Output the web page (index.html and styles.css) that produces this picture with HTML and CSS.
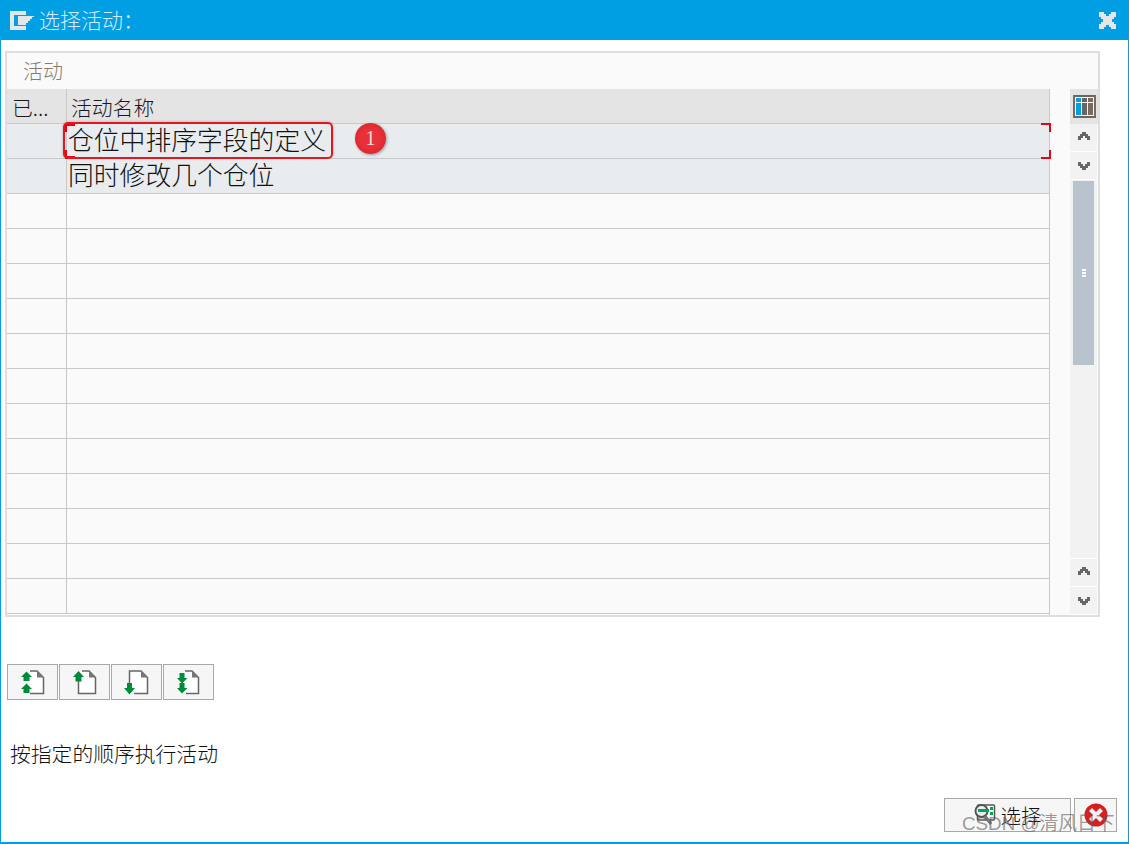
FILE: index.html
```html
<!DOCTYPE html>
<html lang="zh">
<head>
<meta charset="utf-8">
<title>选择活动</title>
<link rel="stylesheet" href="styles.css">
</head>
<body>
<div class="dialog">
  <header class="titlebar">
    <svg class="title-icon" width="25" height="19" viewBox="0 0 25 19"><path d="M0 0H16V4H4V15H16V19H0Z" fill="#e4e7e9"/><path d="M8 5H24V6H22V8H20V10H18V12H16V14H8Z" fill="#e4e7e9"/></svg>
    <span class="title-text">选择活动：</span>
    <svg class="title-close" width="17" height="17" viewBox="0 0 17 17"><path d="M0 0H5V2H7V4H10V2H12V0H17V5H15V7H13V10H15V12H17V17H12V15H10V13H7V15H5V17H0V12H2V10H4V7H2V5H0Z" fill="#e4e6e8"/></svg>
  </header>
  <main class="content">
    <section class="panel">
      <div class="panel-title">活动</div>
      <div class="panel-body">
        <div class="table">
          <div class="row head"><div class="c1">已...</div><div class="c2">活动名称</div></div>
          <div class="row filled">
            <div class="c1"></div><div class="c2 big">仓位中排序字段的定义</div>
            <i class="focus-tl"></i><i class="focus-bl"></i><i class="focus-tr"></i><i class="focus-br"></i>
            <span class="mark"></span><span class="badge">1</span>
          </div>
          <div class="row filled"><div class="c1"></div><div class="c2 big">同时修改几个仓位</div></div>
          <div class="row"><div class="c1"></div><div class="c2"></div></div>
          <div class="row"><div class="c1"></div><div class="c2"></div></div>
          <div class="row"><div class="c1"></div><div class="c2"></div></div>
          <div class="row"><div class="c1"></div><div class="c2"></div></div>
          <div class="row"><div class="c1"></div><div class="c2"></div></div>
          <div class="row"><div class="c1"></div><div class="c2"></div></div>
          <div class="row"><div class="c1"></div><div class="c2"></div></div>
          <div class="row"><div class="c1"></div><div class="c2"></div></div>
          <div class="row"><div class="c1"></div><div class="c2"></div></div>
          <div class="row"><div class="c1"></div><div class="c2"></div></div>
          <div class="row"><div class="c1"></div><div class="c2"></div></div>
          <div class="row"><div class="c1"></div><div class="c2"></div></div>
        </div>
        <div class="scrollcol">
          <div class="col-config">
            <svg width="23" height="23" viewBox="0 0 23 23"><rect width="23" height="23" fill="#f4f4f4"/><rect width="23" height="2" fill="#666"/><rect y="21" width="23" height="2" fill="#666"/><rect width="2" height="23" fill="#7a6a60"/><rect x="21" width="2" height="23" fill="#7a6a60"/><rect x="3" y="3" width="5" height="4" fill="#009fe3"/><rect x="9" y="3" width="5" height="4" fill="#666"/><rect x="15" y="3" width="5" height="4" fill="#7a6a60"/><rect x="3" y="8" width="5" height="12" fill="#009fe3"/><rect x="9" y="8" width="5" height="12" fill="#666"/><rect x="15" y="8" width="5" height="12" fill="#7a6a60"/></svg>
          </div>
          <div class="sb-btn"><svg class="chev-up" width="12" height="8" viewBox="0 0 12 8"><path d="M4 0H8V2H10V4H12V8H9V6H7V4H5V6H3V8H0V4H2V2H4Z" fill="#666"/></svg></div>
          <div class="sb-btn"><svg width="12" height="8" viewBox="0 0 12 8"><path d="M0 0H3V2H5V4H7V2H9V0H12V4H10V6H8V8H4V6H2V4H0Z" fill="#666"/></svg></div>
          <div class="sb-track"><div class="sb-thumb"><i></i><i></i><i></i></div></div>
          <div class="sb-btn"><svg class="chev-up" width="12" height="8" viewBox="0 0 12 8"><path d="M4 0H8V2H10V4H12V8H9V6H7V4H5V6H3V8H0V4H2V2H4Z" fill="#666"/></svg></div>
          <div class="sb-btn"><svg width="12" height="8" viewBox="0 0 12 8"><path d="M0 0H3V2H5V4H7V2H9V0H12V4H10V6H8V8H4V6H2V4H0Z" fill="#666"/></svg></div>
        </div>
      </div>
    </section>
    <div class="toolbar">
      <button class="tool"><svg width="24" height="25" viewBox="0 0 24 25"><path d="M9 1H16L22.5 7.5V23.5H9" fill="#fff" stroke="#666" stroke-width="1.5"/><path d="M16 1V7.5H22.5Z" fill="#777"/><path d="M5.5 1.5L11 7H8.5V11H2.5V7H0Z M5.5 13.5L11 19H8.5V23H2.5V19H0Z" fill="#008a3c"/></svg></button>
      <button class="tool"><svg width="24" height="25" viewBox="0 0 24 25"><path d="M9 1H16L22.5 7.5V23.5H5.5V11" fill="#fff" stroke="#666" stroke-width="1.5"/><path d="M16 1V7.5H22.5Z" fill="#777"/><path d="M5.5 1L11 7H8.5V11.5H2.5V7H0Z" fill="#008a3c"/></svg></button>
      <button class="tool"><svg width="26" height="25" viewBox="0 0 26 25"><path d="M5.5 13V1H17L23.5 7.5V23.5H10" fill="#fff" stroke="#666" stroke-width="1.5"/><path d="M17 1V7.5H23.5Z" fill="#777"/><path d="M3 13H8V18H11L5.5 24.5L0 18H3Z" fill="#008a3c"/></svg></button>
      <button class="tool"><svg width="24" height="25" viewBox="0 0 24 25"><path d="M8 1H15L21.5 7.5V23.5H9" fill="#fff" stroke="#666" stroke-width="1.5"/><path d="M15 1V7.5H21.5Z" fill="#777"/><path d="M2.5 3H7.5V8H10.5L5 13.5L0 8H2.5Z M2.5 13H7.5V18H10.5L5 23.5L0 18H2.5Z" fill="#008a3c"/></svg></button>
    </div>
    <p class="hint">按指定的顺序执行活动</p>
    <footer class="footer">
      <button class="action select"><svg width="22" height="24" viewBox="0 0 22 24"><rect x="3.5" y="2" width="17" height="15" rx="1" fill="#fff" stroke="#555" stroke-width="1.5"/><circle cx="7.5" cy="8" r="6" fill="#e8f0f0" stroke="#555" stroke-width="2"/><rect x="4" y="6" width="11" height="3" fill="#00a651"/><rect x="16" y="4" width="3" height="3" fill="#00a651"/><rect x="16" y="9" width="3" height="3" fill="#00a651"/><path d="M11 13L17 21" stroke="#777" stroke-width="3"/></svg><span>选择</span></button>
      <button class="action cancel"><svg width="24" height="24" viewBox="0 0 24 24"><circle cx="12" cy="12" r="11.5" fill="#d6201f"/><path d="M5 8L8 5L12 9L16 5L19 8L15 12L19 16L16 19L12 15L8 19L5 16L9 12Z" fill="#f2f2f2"/></svg></button>
    </footer>
  </main>
  <span class="watermark">CSDN @清风日下</span>
</div>
</body>
</html>
```
FILE: styles.css
```css
* { box-sizing: border-box; }
html, body { margin: 0; padding: 0; background: #fff; }
body { font-family: "Noto Sans CJK SC", "Liberation Sans", sans-serif; color: #1a1a1a; }
.dialog {
  position: relative; width: 1129px; height: 844px; display: flex; flex-direction: column;
  background: #fff; border: solid #009fe3; border-width: 0 1px 2px 1px; overflow: hidden;
}
.titlebar { height: 40px; margin: 0 -1px; background: #009fe3; display: flex; align-items: center; padding: 0 13px 0 10px; flex: none; }
.title-icon { margin-right: 4px; }
.title-text { font-size: 21px; line-height: 36px; height: 38px; font-weight: 300; color: #d4ecf8; flex: 1; }
.content { flex: 1; display: flex; flex-direction: column; padding: 11px 11px 10px 4px; min-height: 0; }
.panel { width: 1095px; height: 566px; border: 2px solid #dedede; background: #fafafa; display: flex; flex-direction: column; flex: none; }
.panel-title { height: 36px; padding-left: 16px; font-size: 20px; line-height: 36px; font-weight: 300; color: #8a7b6c; flex: none; }
.panel-body { display: flex; flex: 1; min-height: 0; }
.table { width: 1043px; flex: none; border-right: 1px solid #c9c9c9; }
.row { position: relative; display: flex; height: 35px; border-bottom: 1px solid #c9c9c9; }
.row.head { height: 35px; background: #e4e4e4; font-size: 20.8px; font-weight: 300; }
.row.filled { background: #e9ecef; }
.c1 { width: 60px; flex: none; border-right: 1px solid #c9c9c9; padding-left: 5px; line-height: 36px; }
.c2 { flex: 1; padding-left: 4px; line-height: 36px; }
.big { font-size: 25.8px; font-weight: 300; line-height: 30px; padding-left: 1px; color: #111; }
.focus-tl, .focus-bl, .focus-tr, .focus-br { position: absolute; width: 10px; height: 9px; border: solid #e30613; border-width: 0; }
.focus-tl { left: 58px; top: -1px; border-width: 3px 0 0 2px; }
.focus-bl { left: 58px; bottom: -1px; border-width: 0 0 3px 2px; }
.focus-tr { right: -2px; top: -1px; border-width: 2px 2px 0 0; }
.focus-br { right: -2px; bottom: -1px; border-width: 0 2px 2px 0; }
.mark { position: absolute; left: 56px; top: -2px; width: 270px; height: 37px; border: 2px solid #e8141c; border-radius: 5px; box-shadow: 0 0 3px rgba(0,0,0,.25); }
.badge { position: absolute; left: 348px; top: -1px; width: 31px; height: 31px; border-radius: 50%; background: radial-gradient(circle, #e8323a 40%, #d81c26 100%); box-shadow: 1px 1px 3px rgba(0,0,0,.35); color: #f6dcdc; font: 20px/31px "Liberation Serif", serif; text-align: center; }
.scrollcol { margin-left: 20px; width: 28px; display: flex; flex-direction: column; }
.col-config { height: 35px; background: #e4e4e4; display: flex; align-items: center; justify-content: center; }
.sb-btn { width: 27px; height: 28px; background: #f2f2f2; display: flex; align-items: center; justify-content: center; border-bottom: 1px solid #fff; flex: none; }
.chev-up { margin-bottom: 3px; }
.sb-track { flex: 1; width: 27px; background: #f2f2f2; padding: 1px 3px; border-bottom: 1px solid #fff; }
.sb-thumb { height: 184px; background: #b8c3cd; display: flex; flex-direction: column; align-items: center; justify-content: center; gap: 1px; }
.sb-thumb i { width: 4px; height: 2px; background: #fff; display: block; }
.toolbar { display: flex; gap: 1px; margin-top: 47px; margin-left: 2px; }
.tool { width: 51px; height: 36px; background: #f6f6f6; border: 1px solid #a8a8a8; padding: 0; display: flex; align-items: center; justify-content: center; }
.hint { margin: 39px 0 0 5px; font-size: 20.8px; font-weight: 300; line-height: 28px; color: #111; }
.footer { margin-top: auto; display: flex; justify-content: flex-end; gap: 3px; }
.action { height: 34px; background: #f6f6f6; border: 1px solid #a8a8a8; padding: 0; display: flex; align-items: center; justify-content: center; font-family: inherit; color: #111; }
.select { width: 127px; gap: 5px; font-size: 20.5px; font-weight: 300; }
.cancel { width: 43px; }
.watermark { position: absolute; left: 961px; top: 811px; font-size: 18.8px; line-height: 26px; color: rgba(90,90,90,.6); font-family: "Liberation Sans", "Noto Sans CJK SC", sans-serif; white-space: nowrap; }
```
